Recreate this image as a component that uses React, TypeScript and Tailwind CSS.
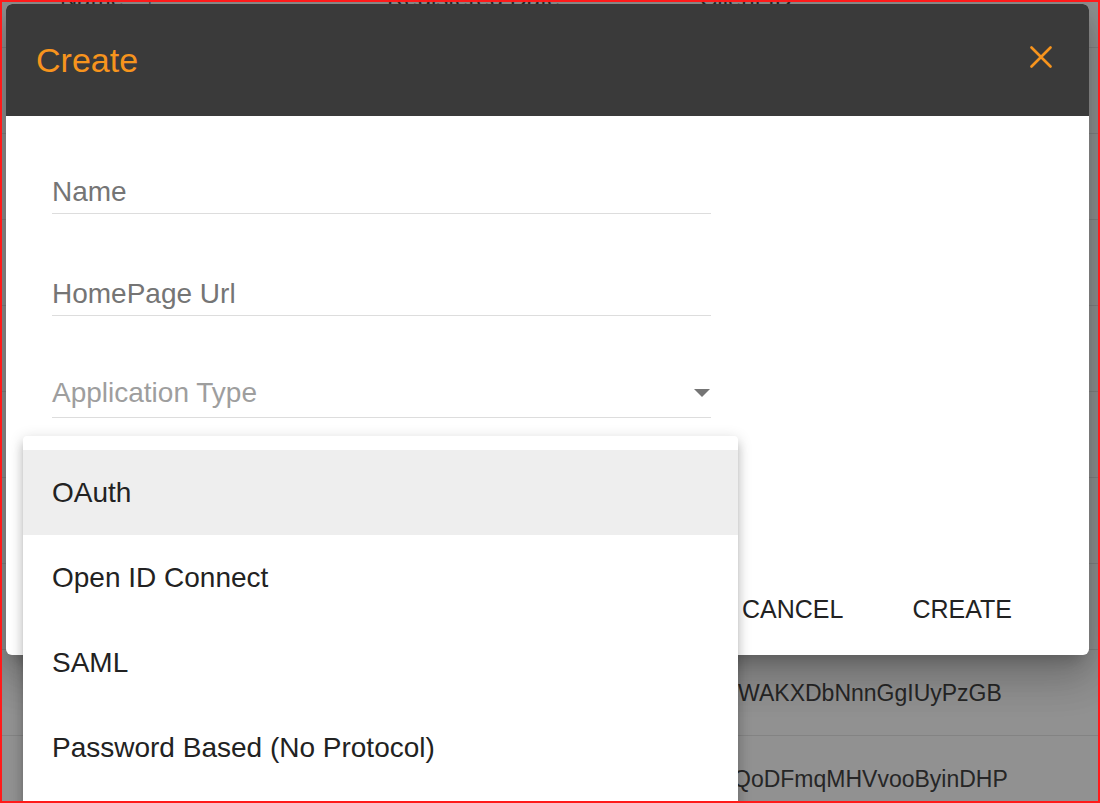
import React from "react";

const rows: { t: string; c: string }[] = [
  { t: "HsZkQpLmNvBtRwXyCdEf", c: "ml-[10px]" },
  { t: "KjTrWqPlMnBvCxZaSdFg", c: "ml-[10px]" },
  { t: "PoIuYtReWqAsDfGhJkLz", c: "ml-[10px]" },
  { t: "MnBvCxZlKjHgFdSaPoIu", c: "ml-[10px]" },
  { t: "QwErTyUiOpAsDfGhJkLx", c: "ml-[10px]" },
  { t: "ZxCvBnMlKjHgFdSaQwEr", c: "ml-[10px]" },
  { t: "RtYuIoPaSdFgHjKlZxCv", c: "ml-[10px]" },
  { t: "HsWAKXDbNnnGgIUyPzGB", c: "ml-[10px]" },
  { t: "QoDFmqMHVvooByinDHP", c: "ml-[33px]" },
];

export default function App() {
  return (
    <div
      className="relative w-[1100px] h-[803px] overflow-hidden bg-[#919191]"
      style={{ fontFamily: '"Liberation Sans", Arial, sans-serif' }}
    >
      {/* background table */}
      <div className="flex flex-col">
        <div className="h-[48px] border-b border-[#838383] flex items-start text-[24px] leading-[32px] text-[#2a2a2a]">
          <div className="-mt-[17px] pl-[60px] w-[387px] flex gap-[20px]">
            <span>Name</span>
            <span>↑</span>
          </div>
          <div className="-mt-[17px] w-[313px]">Registered Date</div>
          <div className="-mt-[17px]">Client ID</div>
        </div>
        {rows.map((r, i) => (
          <div
            key={i}
            className="h-[86px] shrink-0 border-b border-[#838383] flex items-center text-[23px] leading-[32px] text-[#262626]"
          >
            <div className="pl-[60px] w-[387px]">App {i + 1}</div>
            <div className="w-[313px]">2021-03-0{i + 1}</div>
            <div className={r.c}>{r.t}</div>
          </div>
        ))}
      </div>

      {/* dialog */}
      <div className="absolute left-[6px] top-[4px] w-[1083px] h-[651px] rounded-[6px] overflow-hidden bg-white flex flex-col shadow-[0_11px_15px_-7px_rgba(0,0,0,0.2),0_24px_38px_3px_rgba(0,0,0,0.14),0_9px_46px_8px_rgba(0,0,0,0.12)]">
        <div className="h-[112px] shrink-0 bg-[#3a3a3a] flex items-center justify-between pl-[30px] pr-[37px]">
          <span className="text-[34px] leading-[40px] text-[#f7941d]">Create</span>
          <svg width="22" height="22" viewBox="0 0 22 22" className="-mt-[7px]">
            <path d="M1.5 1.5 L20.5 20.5 M20.5 1.5 L1.5 20.5" stroke="#f7941d" strokeWidth="2.6" strokeLinecap="round" />
          </svg>
        </div>
        <div className="flex-1 flex flex-col pt-[44px] pl-[46px]">
          <div className="w-[659px] h-[54px] border-b border-[#dddddd] flex items-end pb-[5px]">
            <span className="text-[28px] leading-[32px] text-[#757575]">Name</span>
          </div>
          <div className="mt-[48px] w-[659px] h-[54px] border-b border-[#dddddd] flex items-end pb-[5px]">
            <span className="text-[28px] leading-[32px] text-[#757575]">HomePage Url</span>
          </div>
          <div className="mt-[48px] w-[659px] h-[54px] border-b border-[#dddddd] flex items-end justify-between pb-[8px]">
            <span className="text-[28px] leading-[32px] text-[#9e9e9e]">Application Type</span>
            <div className="mb-[12px] mr-[1px] w-0 h-0 border-l-[8px] border-r-[8px] border-t-[8px] border-l-transparent border-r-transparent border-t-[#757575]" />
          </div>
          <div className="flex-1" />
          <div className="flex justify-end gap-[69px] pr-[77px] pb-[30px] text-[25px] leading-[32px] text-[#222222]">
            <span>CANCEL</span>
            <span>CREATE</span>
          </div>
        </div>
      </div>

      {/* dropdown menu */}
      <div className="absolute left-[23px] top-[436px] w-[715px] h-[420px] bg-white rounded-[4px] pt-[14px] shadow-[0_5px_5px_-3px_rgba(0,0,0,0.2),0_8px_10px_1px_rgba(0,0,0,0.14),0_3px_14px_2px_rgba(0,0,0,0.12)]">
        {["OAuth", "Open ID Connect", "SAML", "Password Based (No Protocol)"].map((t, i) => (
          <div
            key={t}
            className={
              "h-[85px] flex items-center pl-[29px] text-[28px] leading-[32px] text-[#222222] " +
              (i === 0 ? "bg-[#eeeeee]" : "")
            }
          >
            {t}
          </div>
        ))}
      </div>

      {/* red frame */}
      <div className="absolute inset-0 border-2 border-[#ff1a1a] pointer-events-none" />
    </div>
  );
}
